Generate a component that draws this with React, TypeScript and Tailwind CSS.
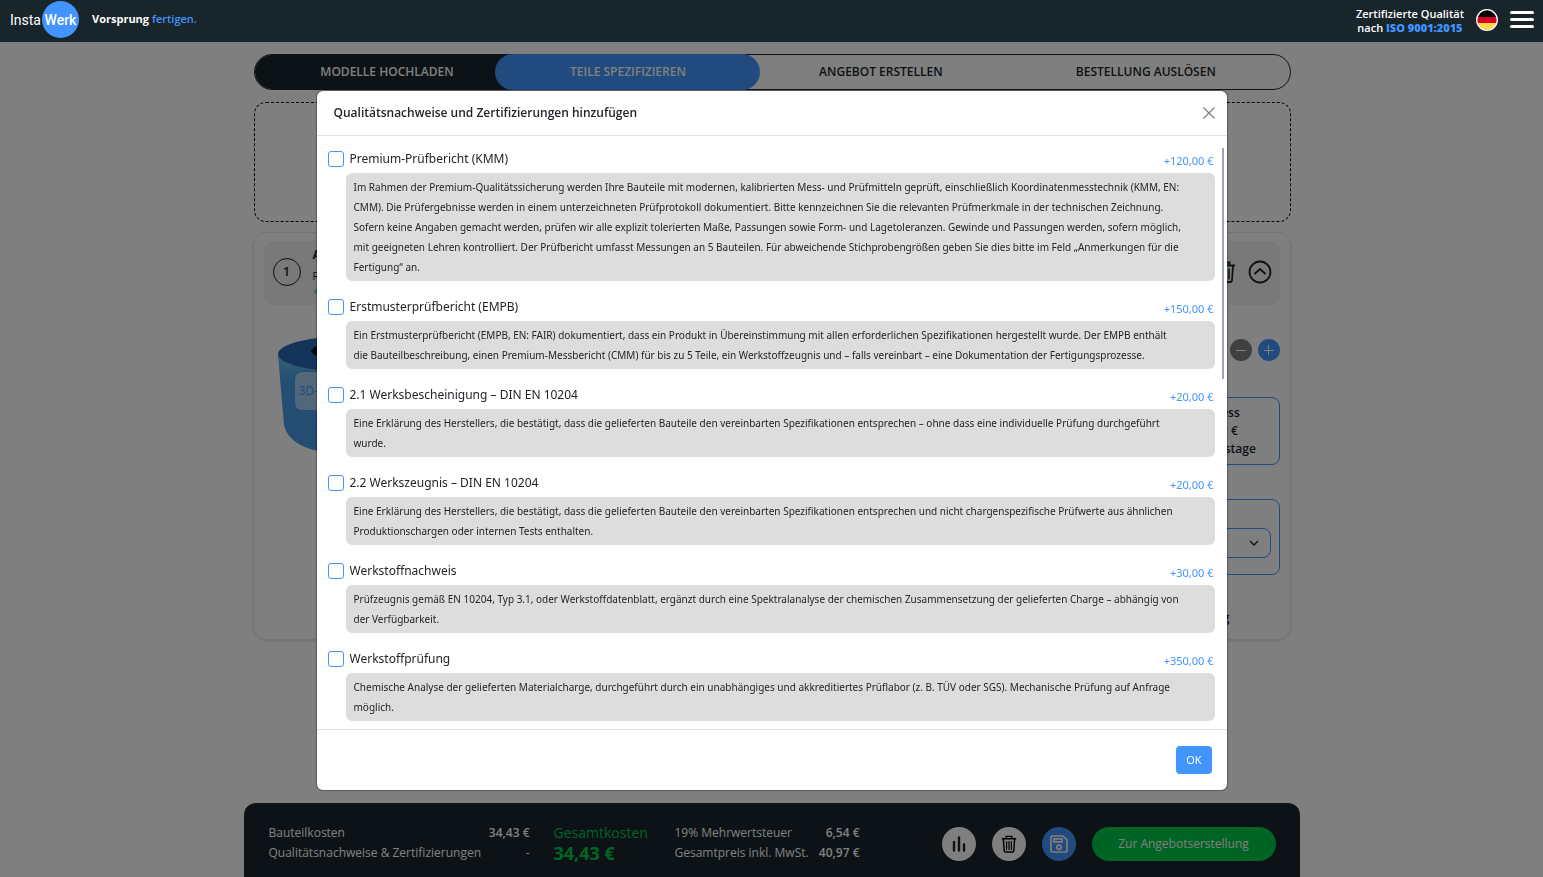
import { useState } from 'react';

interface Certificate {
  id: string;
  title: string;
  price: string;
  text: string;
}

const certificates: Certificate[] = [
  {
    id: 'kmm',
    title: 'Premium-Prüfbericht (KMM)',
    price: '+120,00 €',
    text: 'Im Rahmen der Premium-Qualitätssicherung werden Ihre Bauteile mit modernen, kalibrierten Mess- und Prüfmitteln geprüft, einschließlich Koordinatenmesstechnik (KMM, EN: CMM). Die Prüfergebnisse werden in einem unterzeichneten Prüfprotokoll dokumentiert. Bitte kennzeichnen Sie die relevanten Prüfmerkmale in der technischen Zeichnung. Sofern keine Angaben gemacht werden, prüfen wir alle explizit tolerierten Maße, Passungen sowie Form- und Lagetoleranzen. Gewinde und Passungen werden, sofern möglich, mit geeigneten Lehren kontrolliert. Der Prüfbericht umfasst Messungen an 5 Bauteilen. Für abweichende Stichprobengrößen geben Sie dies bitte im Feld „Anmerkungen für die Fertigung“ an.',
  },
  {
    id: 'empb',
    title: 'Erstmusterprüfbericht (EMPB)',
    price: '+150,00 €',
    text: 'Ein Erstmusterprüfbericht (EMPB, EN: FAIR) dokumentiert, dass ein Produkt in Übereinstimmung mit allen erforderlichen Spezifikationen hergestellt wurde. Der EMPB enthält die Bauteilbeschreibung, einen Premium-Messbericht (CMM) für bis zu 5 Teile, ein Werkstoffzeugnis und – falls vereinbart – eine Dokumentation der Fertigungsprozesse.',
  },
  {
    id: 'w21',
    title: '2.1 Werksbescheinigung – DIN EN 10204',
    price: '+20,00 €',
    text: 'Eine Erklärung des Herstellers, die bestätigt, dass die gelieferten Bauteile den vereinbarten Spezifikationen entsprechen – ohne dass eine individuelle Prüfung durchgeführt wurde.',
  },
  {
    id: 'w22',
    title: '2.2 Werkszeugnis – DIN EN 10204',
    price: '+20,00 €',
    text: 'Eine Erklärung des Herstellers, die bestätigt, dass die gelieferten Bauteile den vereinbarten Spezifikationen entsprechen und nicht chargenspezifische Prüfwerte aus ähnlichen Produktionschargen oder internen Tests enthalten.',
  },
  {
    id: 'nachweis',
    title: 'Werkstoffnachweis',
    price: '+30,00 €',
    text: 'Prüfzeugnis gemäß EN 10204, Typ 3.1, oder Werkstoffdatenblatt, ergänzt durch eine Spektralanalyse der chemischen Zusammensetzung der gelieferten Charge – abhängig von der Verfügbarkeit.',
  },
  {
    id: 'pruefung',
    title: 'Werkstoffprüfung',
    price: '+350,00 €',
    text: 'Chemische Analyse der gelieferten Materialcharge, durchgeführt durch ein unabhängiges und akkreditiertes Prüflabor (z. B. TÜV oder SGS). Mechanische Prüfung auf Anfrage möglich.',
  },
];

function TrashIcon({ className }: { className: string }) {
  return (
    <svg viewBox="0 0 20 22" fill="none" stroke="currentColor" strokeWidth="1.800" className={className} aria-hidden="true">
      <path d="M1 4.500h18M6.500 4V1.500h7V4M3 5l1 14.500Q4.200 21 5.500 21h9q1.300 0 1.500-1.500L17 5" />
      <path d="M7 7.500v11M10 7.500v11M13 7.500v11" strokeWidth="1.500" />
    </svg>
  );
}

function Header() {
  return (
    <header className="fixed inset-x-0 top-0 z-50 flex h-[42px] items-center justify-between bg-[#18252b] pr-[9px] pb-[3px] pl-[10px] text-white">
      <div className="flex items-center">
        <a href="#start" className="flex items-center font-[Roboto,sans-serif] text-sm">
          <span className="w-8">Insta</span>
          <span className="flex size-[37px] items-center justify-center rounded-full bg-[#4294ff] font-medium">Werk</span>
        </a>
        <p className="ml-[13px] text-[11px] font-bold">
          Vorsprung <span className="font-semibold text-[#4294ff]">fertigen.</span>
        </p>
      </div>
      <div className="flex items-center">
        <p className="pt-[3px] text-center text-[11px] leading-[14px] font-semibold">
          Zertifizierte Qualität
          <br />
          nach <span className="font-extrabold text-[#4294ff]">ISO 9001:2015</span>
        </p>
        <button aria-label="Sprache" className="ml-3 size-[22px]">
          <svg viewBox="0 0 22 22">
            <clipPath id="flag">
              <circle cx="11" cy="11" r="10" />
            </clipPath>
            <g clipPath="url(#flag)">
              <path d="M0 0h22v8H0z" fill="#000" />
              <path d="M0 8h22v6H0z" fill="#d80027" />
              <path d="M0 14h22v8H0z" fill="#ffda44" />
            </g>
            <circle cx="11" cy="11" r="10.300" fill="none" stroke="#fff" strokeWidth="1.300" />
          </svg>
        </button>
        <button aria-label="Menü" className="ml-3 flex w-6 flex-col gap-1">
          <span className="h-[3px] rounded-sm bg-white" />
          <span className="h-[3px] rounded-sm bg-white" />
          <span className="h-[3px] rounded-sm bg-white" />
        </button>
      </div>
    </header>
  );
}

function Steps() {
  return (
    <ol className="ml-px flex h-9 rounded-full border border-[#18252b] text-center text-xs leading-[34px] font-semibold text-[#18252b]">
      <li className="w-[25.6%] rounded-l-full bg-[#18252b] text-white">MODELLE HOCHLADEN</li>
      <li className="relative -my-px -ml-6 w-[25.6%] rounded-full bg-[#4294ff] leading-9 text-white">TEILE SPEZIFIZIEREN</li>
      <li className="-ml-3 w-[25.6%]">ANGEBOT ERSTELLEN</li>
      <li className="w-[25.6%]">BESTELLUNG AUSLÖSEN</li>
    </ol>
  );
}

function PartCard() {
  return (
    <section className="mt-[10px] h-[408px] rounded-[14px] border border-gray-200 px-[10px] pt-2 shadow">
      <div className="flex h-16 items-center justify-between rounded-[10px] bg-[#f2f2f2] px-2 pb-[2px]">
        <div className="flex items-center gap-3">
          <span className="ml-px flex size-7 items-center justify-center rounded-full border border-[#18252b] text-[13px] font-semibold">1</span>
          <div className="-mt-1 text-[10px] leading-[18px]">
            <p className="text-xs leading-6 font-bold">Artikel</p>
            <p>Form</p>
            <p className="leading-3 text-[#00c84a]">+ Datei</p>
          </div>
        </div>
        <div className="flex items-center gap-3">
          <button aria-label="Teil löschen">
            <TrashIcon className="h-[22px] w-5" />
          </button>
          <button aria-label="Einklappen">
            <svg viewBox="0 0 24 24" fill="none" stroke="currentColor" strokeWidth="1.800" className="size-6">
              <circle cx="12" cy="12" r="10.500" />
              <path d="m6.500 14 5.500-5 5.500 5" />
            </svg>
          </button>
        </div>
      </div>

      <div className="flex justify-between">
        <div className="relative mt-8 ml-3 h-[120px] w-[150px]">
          <svg viewBox="0 0 150 120" className="size-full">
            <defs>
              <linearGradient id="side" x2="0" y2="1">
                <stop offset="0" stopColor="#6cc4ea" />
                <stop offset="0.250" stopColor="#489fe6" />
                <stop offset="1" stopColor="#4b97e4" />
              </linearGradient>
            </defs>
            <path d="M2 18 8 88Q14 116 75 118T142 88L148 18z" fill="url(#side)" />
            <ellipse cx="75" cy="17" rx="73" ry="18" fill="#2969b8" />
            <ellipse cx="75" cy="14" rx="40" ry="10" fill="#0a1530" />
          </svg>
          <button className="absolute top-[34px] left-[18px] h-10 w-[100px] rounded-lg border border-[#4294ff] bg-white/50 px-1 text-left text-xs text-[#4294ff]">
            3D-Ansicht
          </button>
        </div>

        <div className="flex w-1/2 flex-col items-end text-xs">
          <div className="mt-[34px] flex gap-[6px]">
            <button aria-label="Weniger" className="flex size-[22px] items-center justify-center rounded-full bg-[#808080]">
              <span className="h-px w-[10px] bg-white" />
            </button>
            <button aria-label="Mehr" className="relative flex size-[22px] items-center justify-center rounded-full bg-[#4294ff]">
              <span className="h-px w-[10px] bg-white" />
              <span className="absolute h-[10px] w-px bg-white" />
            </button>
          </div>
          <button className="mt-9 h-[68px] w-[124px] rounded-lg border border-[#4294ff] leading-[18px] font-semibold">
            Express
            <br />
            41,32 €
            <br />6 Arbeitstage
          </button>
          <div className="mt-[34px] h-[76px] w-full rounded-lg border border-[#4294ff] px-2 pt-7">
            <div className="relative">
              <select aria-label="Nachweise" className="h-[30px] w-full appearance-none rounded-lg border border-[#4294ff]">
                <option>Auswahl</option>
              </select>
              <svg viewBox="0 0 10 6" fill="none" stroke="currentColor" strokeWidth="1.300" className="absolute top-3 right-3 w-[10px]">
                <path d="m1 1 4 4 4-4" />
              </svg>
            </div>
          </div>
          <p className="mt-[35px] mr-[50px] font-semibold">Bemerkung</p>
        </div>
      </div>
    </section>
  );
}

function CostBar() {
  return (
    <footer className="fixed inset-x-0 bottom-0 mx-auto flex h-[74px] max-w-[1056px] items-center justify-between rounded-t-xl bg-[#18252b] px-6 pt-2 text-xs leading-5 text-white">
      <div className="flex pb-[2px]">
        <dl className="ml-px grid w-[261px] grid-cols-[1fr_auto]">
          <dt>Bauteilkosten</dt>
          <dd className="text-right font-semibold">34,43 €</dd>
          <dt>Qualitätsnachweise &amp; Zertifizierungen</dt>
          <dd className="text-right">-</dd>
        </dl>
        <dl className="ml-6 w-[121px] text-[#00c84a]">
          <dt className="text-sm leading-5">Gesamtkosten</dt>
          <dd className="text-lg leading-5 font-bold">34,43 €</dd>
        </dl>
        <dl className="grid w-[185px] grid-cols-[1fr_auto]">
          <dt>19% Mehrwertsteuer</dt>
          <dd className="text-right font-semibold">6,54 €</dd>
          <dt>Gesamtpreis inkl. MwSt.</dt>
          <dd className="text-right font-semibold">40,97 €</dd>
        </dl>
      </div>
      <div className="flex gap-4">
        <button aria-label="Statistik" className="flex size-[34px] items-center justify-center rounded-full bg-white text-[#18252b]">
          <svg viewBox="0 0 14 16" fill="none" stroke="currentColor" strokeWidth="2.400" strokeLinecap="round" className="h-4 w-[14px]">
            <path d="M2 14.500V6M7 14.500V1.500M12 14.500V8.500" />
          </svg>
        </button>
        <button aria-label="Alle löschen" className="flex size-[34px] items-center justify-center rounded-full bg-white text-black">
          <TrashIcon className="h-[18px] w-4" />
        </button>
        <button aria-label="Speichern" className="flex size-[34px] items-center justify-center rounded-full bg-[#4294ff]">
          <svg viewBox="0 0 18 18" fill="none" stroke="currentColor" strokeWidth="1.700" className="size-[18px]">
            <path d="M2.500 1H13l4 4v10.500Q17 17 15.500 17h-13Q1 17 1 15.500v-13Q1 1 2.500 1z" />
            <path d="M4 3.800h8v3H4z" />
            <circle cx="9" cy="12.300" r="2.200" />
          </svg>
        </button>
        <button className="h-[34px] w-[184px] rounded-full bg-[#00c84a]">Zur Angebotserstellung</button>
      </div>
    </footer>
  );
}

function CertificateDialog() {
  const [selected, setSelected] = useState<string[]>([]);

  const toggle = (id: string) => {
    setSelected(selected.includes(id) ? selected.filter(s => s !== id) : [...selected, id]);
  };

  return (
    <div className="fixed inset-0 z-40 flex items-start justify-center bg-black/50 pt-[91px]">
      <div
        role="dialog"
        aria-labelledby="dialog-title"
        className="relative flex max-h-[calc(100vh-178px)] w-full max-w-[910px] flex-col rounded-md bg-white text-[#212529] shadow-[0_0_1px_1px_rgba(0,0,0,0.3)]"
      >
        <div className="flex h-[45px] shrink-0 items-center justify-between border-b border-[#dee2e6] pr-3 pl-[17px]">
          <h2 id="dialog-title" className="text-xs font-semibold">Qualitätsnachweise und Zertifizierungen hinzufügen</h2>
          <button aria-label="Schließen" className="text-[#808080]">
            <svg viewBox="0 0 12 12" stroke="currentColor" strokeWidth="1.300" className="size-3">
              <path d="m0.500 0.500 11 11M11.500 0.500l-11 11" />
            </svg>
          </button>
        </div>

        <div className="relative flex min-h-0 flex-col">
          <ul className="space-y-4 overflow-y-auto px-3 pt-[13px] pb-2 font-['Noto_Sans',sans-serif]">
            {certificates.map(cert => (
              <li key={cert.id}>
                <div className="flex h-6 items-start justify-between">
                  <label className="-ml-px flex h-5 items-center gap-[6px] text-xs">
                    <input
                      type="checkbox"
                      checked={selected.includes(cert.id)}
                      onChange={() => toggle(cert.id)}
                      className="size-4 appearance-none rounded-[3px] border border-[#4294ff] checked:bg-[#4294ff]"
                    />
                    {cert.title}
                  </label>
                  <span className="pr-px text-[11px] leading-6 text-[#4294ff]">{cert.price}</span>
                </div>
                <p className="ml-[17px] rounded-md bg-[#dddddd] py-1 pr-8 pl-2 text-[10px] leading-5">{cert.text}</p>
              </li>
            ))}
          </ul>
          <span className="absolute top-3 right-[3px] h-[231px] w-[2px] bg-[#9da3b8]" />
        </div>

        <div className="flex h-[61px] shrink-0 items-center justify-end border-t border-[#dee2e6] pr-[15px]">
          <button className="h-7 rounded bg-[#4294ff] px-[10px] text-[11px] text-white">OK</button>
        </div>
      </div>
    </div>
  );
}

export default function App() {
  return (
    <div className="min-h-screen bg-white font-['Open_Sans',sans-serif] text-[#18252b]">
      <Header />
      <main className="mx-auto max-w-[1038px] pt-[54px]">
        <Steps />
        <div className="mt-3 ml-px h-[120px] rounded-xl border border-dashed border-black" />
        <PartCard />
      </main>
      <CostBar />
      <CertificateDialog />
    </div>
  );
}
